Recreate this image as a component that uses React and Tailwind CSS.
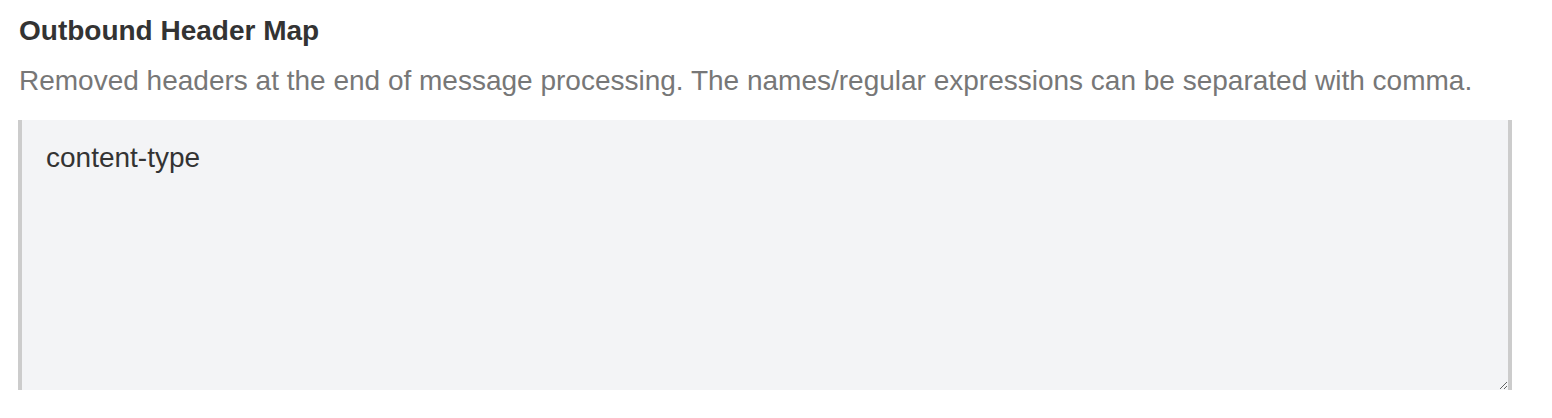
import React, { useState } from "react";

export default function App() {
  const [value, setValue] = useState("content-type");

  return (
    <div className="w-[1552px] h-[418px] bg-white font-['Liberation_Sans',Arial,sans-serif] pl-[18px] pt-[13px]">
      <div className="w-[1494px]">
        <label htmlFor="outboundHeaders" className="block text-[28px] leading-[36px] font-bold text-[#333333] pl-px">
          Outbound Header Map
        </label>
        <p className="text-[28px] leading-[36px] text-[#777777] mt-[14px] pl-px">
          Removed headers at the end of message processing. The names/regular expressions can be separated with comma.
        </p>
        <textarea
          id="outboundHeaders"
          value={value}
          onChange={(e) => setValue(e.target.value)}
          className="block mt-[21px] w-full h-[270px] bg-[#f3f4f6] border-x-4 border-[#cccccc] px-[24px] py-[20px] text-[28px] leading-[36px] text-[#333333] outline-none resize-y"
        />
      </div>
    </div>
  );
}
